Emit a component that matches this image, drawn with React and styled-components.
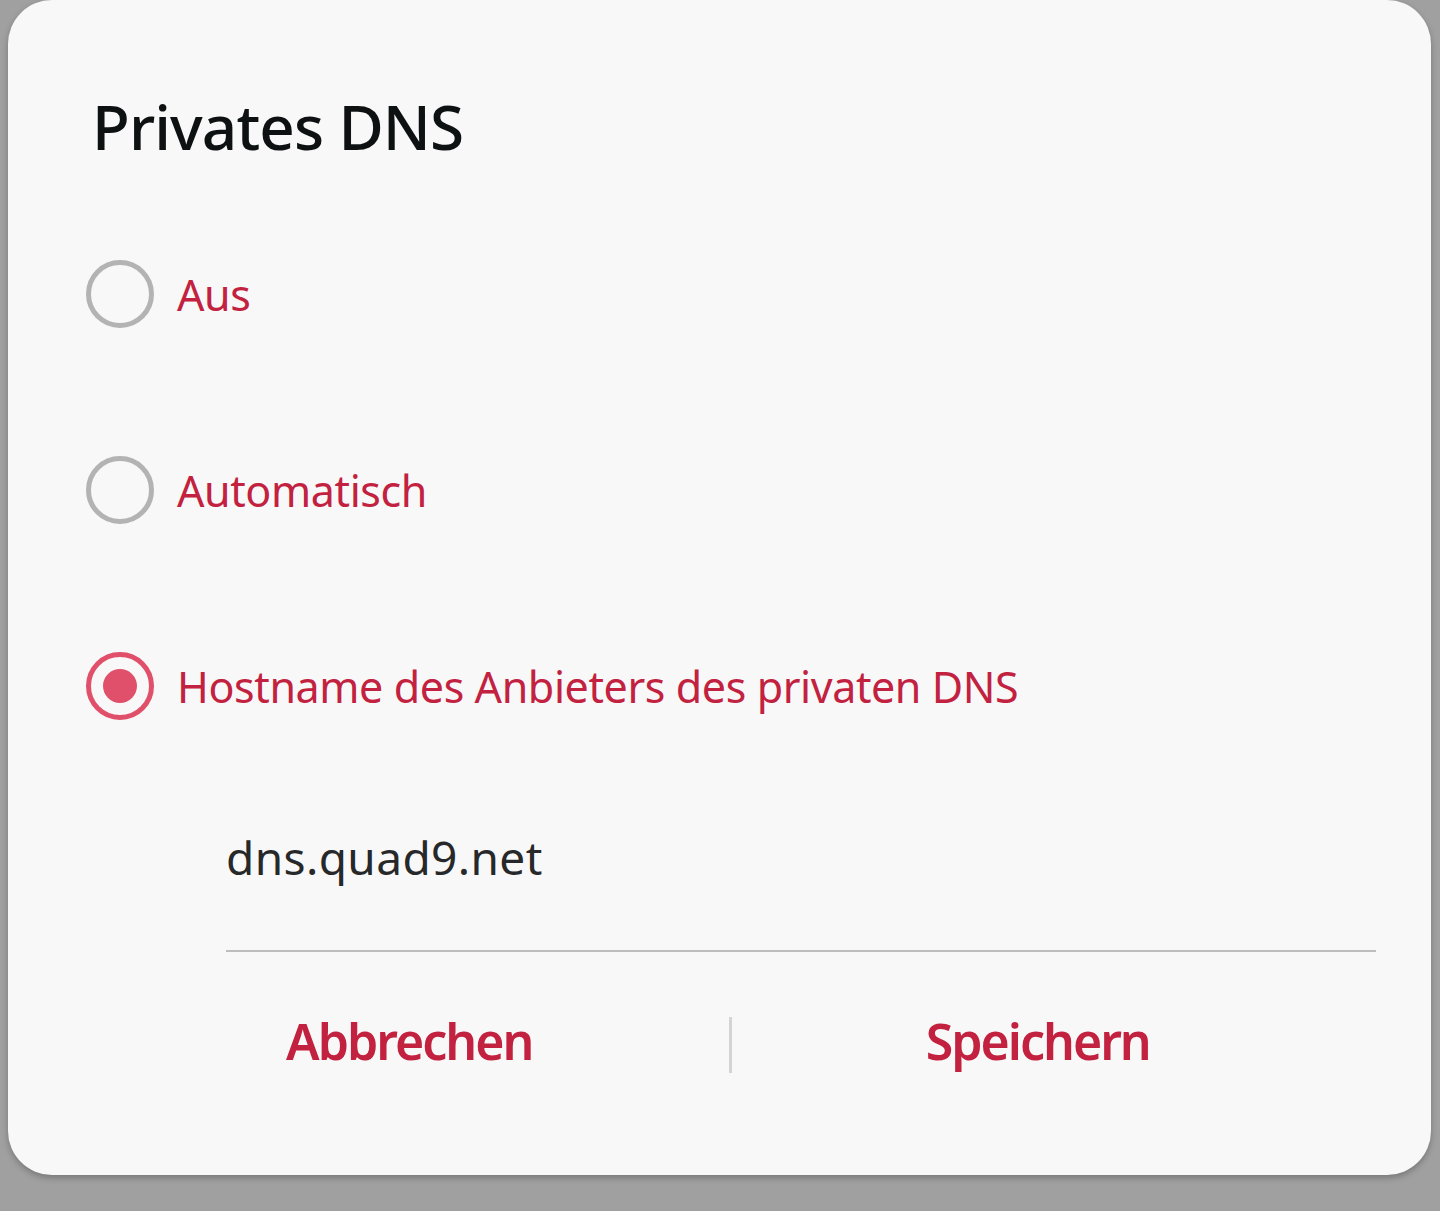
import styled, { createGlobalStyle } from "styled-components";

const GlobalStyle = createGlobalStyle`
  html, body {
    margin: 0;
    padding: 0;
    background: #a0a0a0;
  }
  body {
    font-family: "Noto Sans", "Open Sans", sans-serif;
  }
`;

const Screen = styled.div`
  width: 1440px;
  height: 1211px;
  background: #a0a0a0;
  padding: 0 9px 0 8px;
  box-sizing: border-box;
  overflow: hidden;
`;

const Dialog = styled.div`
  height: 1175px;
  background: #f8f8f8;
  border-radius: 44px;
  box-shadow: 0 3px 6px rgba(0, 0, 0, 0.25);
  display: flex;
  flex-direction: column;
  box-sizing: border-box;
`;

const Title = styled.h1`
  margin: 0;
  height: 196px;
  padding: 84px 0 0 84px;
  box-sizing: border-box;
  font-size: 62px;
  line-height: normal;
  font-weight: 500;
  color: #0d1111;
  letter-spacing: -0.9px;
`;

const Option = styled.label`
  height: 196px;
  display: flex;
  align-items: center;
  gap: 23px;
  padding-left: 78px;
  cursor: pointer;
`;

const Radio = styled.span`
  width: 68px;
  height: 68px;
  border-radius: 50%;
  box-sizing: border-box;
  border: 5px solid ${(p) => (p.$checked ? "#e0506a" : "#b3b3b3")};
  display: flex;
  align-items: center;
  justify-content: center;

  &::after {
    content: "";
    width: 34px;
    height: 34px;
    border-radius: 50%;
    background: #e0506a;
    display: ${(p) => (p.$checked ? "block" : "none")};
  }
`;

const OptionText = styled.span`
  font-size: 43px;
  color: #c2213f;
  letter-spacing: -0.4px;
`;

const InputWrap = styled.div`
  margin: 0 55px 0 218px;
  height: 168px;
  display: flex;
  align-items: flex-end;
  border-bottom: 2px solid #bdbdbd;
  box-sizing: border-box;
`;

const HostInput = styled.div`
  font-size: 46px;
  color: #262829;
  padding-bottom: 62px;
  letter-spacing: 0.4px;
`;

const Buttons = styled.div`
  display: grid;
  grid-template-columns: 1fr 2px 1fr;
  align-items: center;
  margin: 0 80px 0 88px;
  height: 186px;
`;

const Button = styled.button`
  background: none;
  border: none;
  font-family: "Noto Sans", sans-serif;
  font-stretch: condensed;
  font-size: 50px;
  font-weight: 600;
  color: #c2213f;
  letter-spacing: -2px;
  padding: 0 0 8px;
  cursor: pointer;
`;

const Divider = styled.span`
  width: 3px;
  height: 56px;
  margin-left: 6px;
  background: #d4d4d4;
`;

export default function App() {
  const options = ["Aus", "Automatisch", "Hostname des Anbieters des privaten DNS"];
  return (
    <Screen>
      <GlobalStyle />
      <Dialog>
        <Title>Privates DNS</Title>
        {options.map((o, i) => (
          <Option key={o}>
            <Radio $checked={i === 2} />
            <OptionText>{o}</OptionText>
          </Option>
        ))}
        <InputWrap>
          <HostInput>dns.quad9.net</HostInput>
        </InputWrap>
        <Buttons>
          <Button>Abbrechen</Button>
          <Divider />
          <Button>Speichern</Button>
        </Buttons>
      </Dialog>
    </Screen>
  );
}
